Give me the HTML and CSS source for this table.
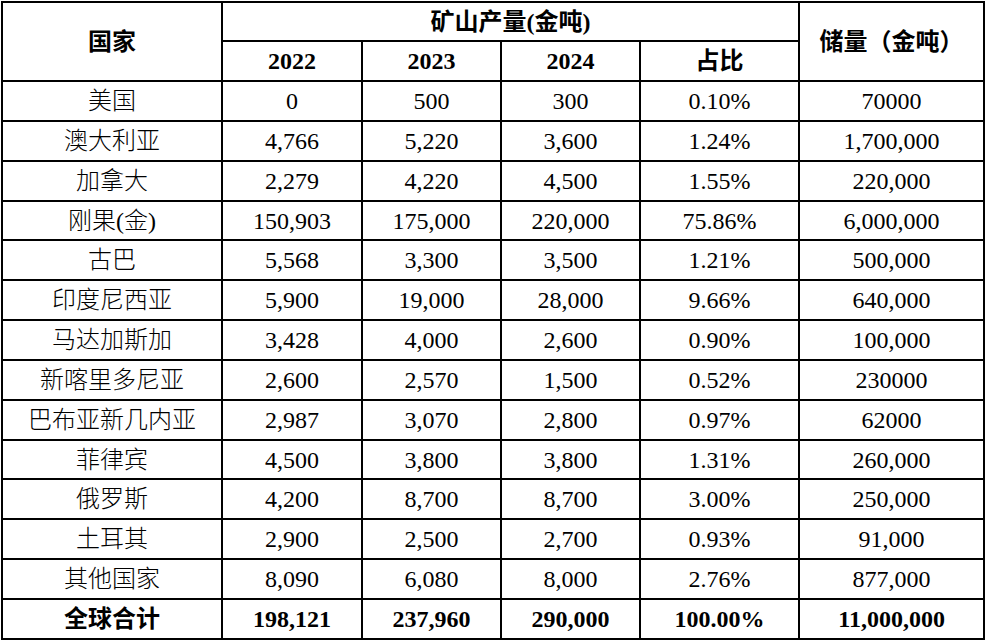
FILE: index.html
```html
<!DOCTYPE html>
<html lang="zh-CN">
<head>
<meta charset="utf-8">
<title>全球金矿产量与储量</title>
<link rel="stylesheet" href="styles.css">
</head>
<body>
<table class="data">
  <colgroup>
    <col class="c-country">
    <col class="c-year">
    <col class="c-year2">
    <col class="c-year2">
    <col class="c-share">
    <col class="c-reserve">
  </colgroup>
  <thead>
    <tr class="h1">
      <th rowspan="2">国家</th>
      <th colspan="4">矿山产量(金吨)</th>
      <th rowspan="2">储量（金吨）</th>
    </tr>
    <tr class="h2">
      <th>2022</th>
      <th>2023</th>
      <th>2024</th>
      <th>占比</th>
    </tr>
  </thead>
  <tbody>
    <tr><td>美国</td><td>0</td><td>500</td><td>300</td><td>0.10%</td><td>70000</td></tr>
    <tr><td>澳大利亚</td><td>4,766</td><td>5,220</td><td>3,600</td><td>1.24%</td><td>1,700,000</td></tr>
    <tr><td>加拿大</td><td>2,279</td><td>4,220</td><td>4,500</td><td>1.55%</td><td>220,000</td></tr>
    <tr class="short"><td>刚果(金)</td><td>150,903</td><td>175,000</td><td>220,000</td><td>75.86%</td><td>6,000,000</td></tr>
    <tr><td>古巴</td><td>5,568</td><td>3,300</td><td>3,500</td><td>1.21%</td><td>500,000</td></tr>
    <tr><td>印度尼西亚</td><td>5,900</td><td>19,000</td><td>28,000</td><td>9.66%</td><td>640,000</td></tr>
    <tr><td>马达加斯加</td><td>3,428</td><td>4,000</td><td>2,600</td><td>0.90%</td><td>100,000</td></tr>
    <tr><td>新喀里多尼亚</td><td>2,600</td><td>2,570</td><td>1,500</td><td>0.52%</td><td>230000</td></tr>
    <tr><td>巴布亚新几内亚</td><td>2,987</td><td>3,070</td><td>2,800</td><td>0.97%</td><td>62000</td></tr>
    <tr class="short"><td>菲律宾</td><td>4,500</td><td>3,800</td><td>3,800</td><td>1.31%</td><td>260,000</td></tr>
    <tr><td>俄罗斯</td><td>4,200</td><td>8,700</td><td>8,700</td><td>3.00%</td><td>250,000</td></tr>
    <tr><td>土耳其</td><td>2,900</td><td>2,500</td><td>2,700</td><td>0.93%</td><td>91,000</td></tr>
    <tr><td>其他国家</td><td>8,090</td><td>6,080</td><td>8,000</td><td>2.76%</td><td>877,000</td></tr>
    <tr class="total"><td>全球合计</td><td>198,121</td><td>237,960</td><td>290,000</td><td>100.00%</td><td>11,000,000</td></tr>
  </tbody>
</table>
</body>
</html>
```
FILE: styles.css
```css
html, body {
  margin: 0;
  padding: 0;
  background: #ffffff;
}

body {
  padding: 1px 0 0 1px;
}

.data {
  border-collapse: collapse;
  table-layout: fixed;
  width: 984px;
  font-family: "Liberation Serif", "Noto Sans CJK SC", serif;
  font-size: 24px;
  color: #000;
}

.c-country { width: 220px; }
.c-year { width: 140px; }
.c-year2 { width: 139px; }
.c-share { width: 159px; }
.c-reserve { width: 185px; }

.data th,
.data td {
  border: 2px solid #000;
  padding: 0;
  text-align: center;
  vertical-align: middle;
  line-height: 1;
  white-space: nowrap;
}

.data th {
  font-weight: bold;
}

.data tr {
  height: 40px;
}

.data tr.h1 {
  height: 39px;
}

.data tr.short {
  height: 39px;
}

.data td {
  font-weight: 300;
}

.data tr.total td {
  font-weight: bold;
}
```
